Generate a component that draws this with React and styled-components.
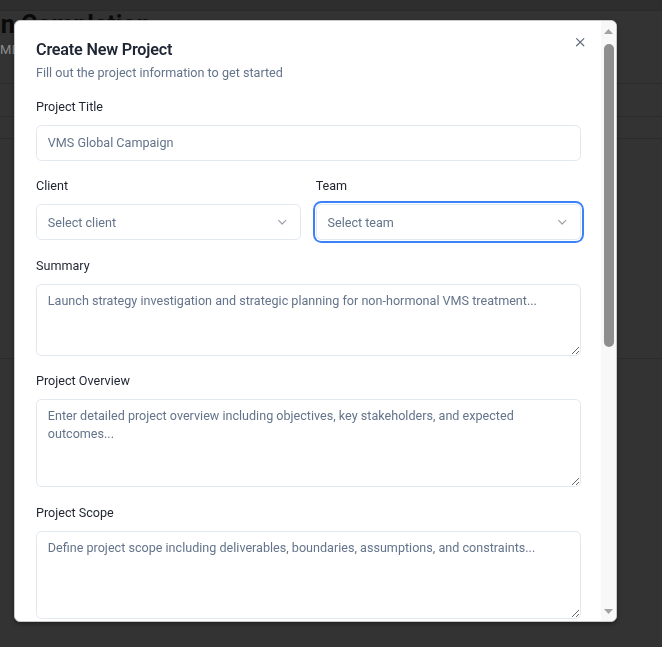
import React from "react";
import styled, { createGlobalStyle } from "styled-components";
import { X, ChevronDown } from "lucide-react";

const GlobalStyle = createGlobalStyle`
  html, body { margin: 0; padding: 0; }
  body {
    font-family: Roboto, "Noto Sans", Arial, sans-serif;
    background: #333333;
    overflow: hidden;
  }
  * { box-sizing: border-box; }
`;

/* ---------- dimmed page behind the dialog ---------- */
const Backdrop = styled.div`
  min-height: 100vh;
  background: #333333;
  display: flex;
  flex-direction: column;
  overflow: hidden;
`;
const TopBar = styled.div`
  height: 11px;
  background: #2e2e2e;
  border-bottom: 1px solid #2a2a2a;
`;
const PageHeader = styled.header`
  height: 73px;
  border-bottom: 1px solid #2b2b2b;
  display: flex;
  flex-direction: column;
  overflow: hidden;
`;
const PageTitle = styled.h1`
  margin: 0 0 0 -99px;
  font-size: 25px;
  font-weight: 700;
  line-height: 27px;
  color: #0a0a0a;
  white-space: nowrap;
`;
const PageSub = styled.div`
  margin-top: 3px;
  font-size: 13px;
  line-height: 18px;
  color: #8c8c8c;
  letter-spacing: 0.3px;
  white-space: nowrap;
`;
const PageBand = styled.div`
  height: ${(p) => p.$h}px;
  border-bottom: 1px solid #2b2b2b;
`;

/* ---------- dialog ---------- */
const Dialog = styled.div`
  position: fixed;
  left: 14px;
  top: 20px;
  width: 603px;
  height: 602px;
  background: #ffffff;
  border: 1px solid #c9c9c9;
  border-radius: 6px;
  box-shadow: 0 2px 4px rgba(0, 0, 0, 0.35);
  display: flex;
  overflow: hidden;
`;
const ScrollArea = styled.div`
  flex: 1;
  min-width: 0;
  overflow: hidden;
`;
const ScrollBar = styled.div`
  width: 15px;
  flex-shrink: 0;
  background: #f8f8f8;
  display: flex;
  flex-direction: column;
`;
const ScrollButton = styled.div`
  height: 20px;
  display: flex;
  align-items: center;
  justify-content: center;
  color: #a3a3a3;
`;
const ScrollTrack = styled.div`
  flex: 1;
  display: flex;
  justify-content: center;
  align-items: flex-start;
  padding-top: 3px;
`;
const ScrollThumb = styled.div`
  width: 10px;
  height: 303px;
  border-radius: 5px;
  background: #8e8e8e;
`;
const CloseButton = styled.button`
  position: absolute;
  top: 14px;
  right: 29px;
  width: 14.4px;
  height: 14.4px;
  padding: 0;
  border: none;
  background: transparent;
  color: #475569;
  opacity: 0.85;
  display: flex;
  align-items: center;
  justify-content: center;
  cursor: pointer;
`;
const Body = styled.div`
  padding: 21px 20px 24px 21px;
  display: flex;
  flex-direction: column;
  gap: 16.4px;
`;
const Header = styled.div`
  display: flex;
  flex-direction: column;
  gap: 5.4px;
`;
const Title = styled.h2`
  margin: 0;
  font-size: 16.2px;
  line-height: 16.2px;
  font-weight: 600;
  letter-spacing: -0.2px;
  color: #1e2533;
`;
const Description = styled.p`
  margin: 0;
  font-size: 12.6px;
  line-height: 18px;
  color: #64748b;
`;
const Field = styled.div`
  display: flex;
  flex-direction: column;
  gap: 9px;
  min-width: 0;
`;
const Row = styled.div`
  display: grid;
  grid-template-columns: 1fr 1fr;
  gap: 14.4px;
`;
const Label = styled.label`
  font-size: 12.6px;
  line-height: 18px;
  font-weight: 400;
  color: #1f2430;
`;
const Input = styled.input`
  height: 36px;
  width: 100%;
  border: 1px solid #e2e8f0;
  border-radius: 5.4px;
  padding: 0 10.8px;
  font-family: inherit;
  font-size: 12.6px;
  color: #0f172a;
  background: #fff;
  outline: none;
  &::placeholder { color: #64748b; }
`;
const SelectTrigger = styled.button`
  height: 36px;
  width: 100%;
  border: 1px solid #e2e8f0;
  border-radius: 5.4px;
  padding: 0 10.8px;
  display: flex;
  align-items: center;
  justify-content: space-between;
  font-family: inherit;
  font-size: 12.6px;
  color: #64748b;
  background: #fff;
  text-align: left;
  cursor: pointer;
  outline: none;
  box-shadow: ${(p) =>
    p.$focused ? "0 0 0 1px #ffffff, 0 0 0 3px #3b82f6" : "none"};
  svg { color: #0f172a; opacity: 0.4; flex-shrink: 0; }
`;
const TextArea = styled.textarea`
  display: block;
  width: 100%;
  height: ${(p) => p.$h}px;
  border: 1px solid #e2e8f0;
  border-radius: 5.4px;
  padding: 7.2px 10.8px;
  font-family: inherit;
  font-size: 12.6px;
  line-height: 18px;
  color: #0f172a;
  background: #fff;
  outline: none;
  &::placeholder { color: #64748b; }
`;
const Footer = styled.div`
  display: flex;
  justify-content: flex-end;
  gap: 9px;
  padding-top: 6px;
`;
const Button = styled.button`
  height: 36px;
  padding: 0 14.4px;
  border-radius: 5.4px;
  font-family: inherit;
  font-size: 12.6px;
  font-weight: 500;
  cursor: pointer;
  border: 1px solid ${(p) => (p.$primary ? "#0f172a" : "#e2e8f0")};
  background: ${(p) => (p.$primary ? "#0f172a" : "#ffffff")};
  color: ${(p) => (p.$primary ? "#ffffff" : "#0f172a")};
`;

function Select({ placeholder, focused }) {
  return (
    <SelectTrigger type="button" $focused={focused}>
      <span>{placeholder}</span>
      <ChevronDown size={14.4} strokeWidth={2} />
    </SelectTrigger>
  );
}

function Arrow({ up }) {
  return (
    <svg width="9" height="5" viewBox="0 0 9 5">
      <path d={up ? "M0 5 L4.5 0 L9 5 Z" : "M0 0 L9 0 L4.5 5 Z"} fill="currentColor" />
    </svg>
  );
}

export default function App() {
  return (
    <>
      <GlobalStyle />
      <Backdrop>
        <TopBar />
        <PageHeader>
          <PageTitle>Campaign Completion</PageTitle>
          <PageSub>MEDICAL AFFAIRS</PageSub>
        </PageHeader>
        <PageBand $h={33} />
        <PageBand $h={22} />
        <PageBand $h={220} />
      </Backdrop>

      <Dialog role="dialog">
        <CloseButton aria-label="Close">
          <X size={14.4} strokeWidth={2} />
        </CloseButton>
        <ScrollArea>
          <Body>
            <Header>
              <Title>Create New Project</Title>
              <Description>Fill out the project information to get started</Description>
            </Header>

            <Field>
              <Label>Project Title</Label>
              <Input placeholder="VMS Global Campaign" />
            </Field>

            <Row>
              <Field>
                <Label>Client</Label>
                <Select placeholder="Select client" />
              </Field>
              <Field>
                <Label>Team</Label>
                <Select placeholder="Select team" focused />
              </Field>
            </Row>

            <Field>
              <Label>Summary</Label>
              <TextArea
                $h={72}
                placeholder="Launch strategy investigation and strategic planning for non-hormonal VMS treatment..."
              />
            </Field>

            <Field>
              <Label>Project Overview</Label>
              <TextArea
                $h={88}
                placeholder="Enter detailed project overview including objectives, key stakeholders, and expected outcomes..."
              />
            </Field>

            <Field>
              <Label>Project Scope</Label>
              <TextArea
                $h={88}
                placeholder="Define project scope including deliverables, boundaries, assumptions, and constraints..."
              />
            </Field>

            <Field>
              <Label>Key Deliverables</Label>
              <TextArea $h={88} placeholder="List the key deliverables for this project..." />
            </Field>

            <Row>
              <Field>
                <Label>Start Date</Label>
                <Input placeholder="mm/dd/yyyy" />
              </Field>
              <Field>
                <Label>End Date</Label>
                <Input placeholder="mm/dd/yyyy" />
              </Field>
            </Row>

            <Footer>
              <Button type="button">Cancel</Button>
              <Button type="button" $primary>Create Project</Button>
            </Footer>
          </Body>
        </ScrollArea>
        <ScrollBar aria-hidden="true">
          <ScrollButton><Arrow up /></ScrollButton>
          <ScrollTrack><ScrollThumb /></ScrollTrack>
          <ScrollButton><Arrow /></ScrollButton>
        </ScrollBar>
      </Dialog>
    </>
  );
}
